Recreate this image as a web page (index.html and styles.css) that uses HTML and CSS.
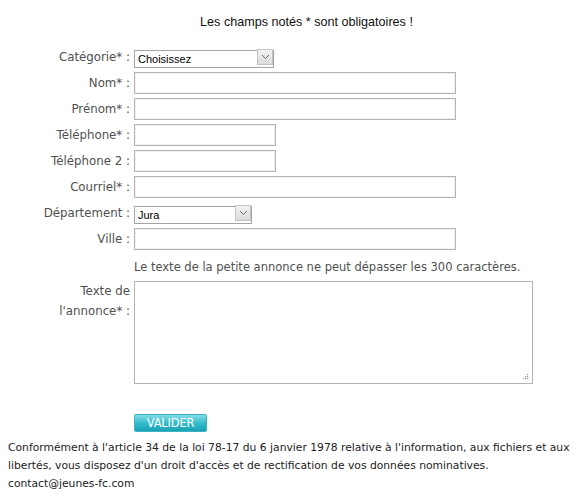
FILE: index.html
```html
<!DOCTYPE html>
<html lang="fr">
<head>
  <meta charset="UTF-8">
  <title>Petite annonce</title>
  <link rel="stylesheet" href="styles.css">
</head>
<body>

  <p class="required-note">Les champs notés * sont obligatoires !</p>

  <form class="ad-form" action="#" method="post">
    <label class="field-label" for="cat">Catégorie* :</label>
    <div class="field">
      <div class="select-wrap cat-select">
        <select id="cat"><option>Choisissez</option></select>
        <span class="select-arrow"><svg width="9" height="6" viewBox="0 0 9 6"><path d="M1 1 L4.5 4.5 L8 1" fill="none" stroke="#666" stroke-width="1"/></svg></span>
      </div>
    </div>

    <label class="field-label" for="nom">Nom* :</label>
    <div class="field"><input type="text" id="nom" class="wide"></div>

    <label class="field-label" for="prenom">Prénom* :</label>
    <div class="field"><input type="text" id="prenom" class="wide"></div>

    <label class="field-label" for="tel">Téléphone* :</label>
    <div class="field"><input type="text" id="tel" class="short"></div>

    <label class="field-label" for="tel2">Téléphone 2 :</label>
    <div class="field"><input type="text" id="tel2" class="short"></div>

    <label class="field-label" for="mail">Courriel* :</label>
    <div class="field"><input type="text" id="mail" class="wide"></div>

    <label class="field-label" for="dep">Département :</label>
    <div class="field">
      <div class="select-wrap dep-select">
        <select id="dep"><option>Jura</option></select>
        <span class="select-arrow"><svg width="9" height="6" viewBox="0 0 9 6"><path d="M1 1 L4.5 4.5 L8 1" fill="none" stroke="#666" stroke-width="1"/></svg></span>
      </div>
    </div>

    <label class="field-label" for="ville">Ville :</label>
    <div class="field"><input type="text" id="ville" class="wide"></div>

    <div></div>
    <p class="limit-note">Le texte de la petite annonce ne peut dépasser les 300 caractères.</p>

    <label class="field-label multi" for="texte">Texte de l'annonce* :</label>
    <div class="field text-field">
      <textarea id="texte"></textarea>
      <!-- resize grip -->
      <svg class="grip" width="7" height="7" viewBox="0 0 7 7">
        <rect x="5" y="0" width="1.2" height="1.2" fill="#999"/>
        <rect x="3" y="2" width="1.2" height="1.2" fill="#999"/>
        <rect x="5" y="2" width="1.2" height="1.2" fill="#999"/>
        <rect x="1" y="4" width="1.2" height="1.2" fill="#999"/>
        <rect x="3" y="4" width="1.2" height="1.2" fill="#999"/>
        <rect x="5" y="4" width="1.2" height="1.2" fill="#999"/>
      </svg>
    </div>

    <div></div>
    <div class="submit-row"><button type="submit">VALIDER</button></div>
  </form>

  <p class="legal">Conformément à l'article 34 de la loi 78-17 du 6 janvier 1978 relative à l'information, aux fichiers et aux libertés, vous disposez d'un droit d'accès et de rectification de vos données nominatives.<br>contact@jeunes-fc.com</p>

</body>
</html>
```

FILE: styles.css
```css
body {
  margin: 8px 2px 8px 8px;
  font-family: 'DejaVu Sans', Verdana, sans-serif;
  color: #333;
  background: #fff;
}

.required-note {
  font-family: 'Liberation Sans', Arial, sans-serif;
  font-size: 12.6px;
  color: #111;
  text-align: center;
  margin: 7px 0 0 0;
  padding-left: 32px;
  line-height: 14px;
}

.ad-form {
  display: grid;
  grid-template-columns: 122px 1fr;
  column-gap: 4px;
  row-gap: 4px;
  margin-top: 17px;
}

.field-label {
  font-size: 11.8px;
  color: #505050;
  text-align: right;
  line-height: 22px;
  white-space: nowrap;
}

.field-label.multi {
  white-space: normal;
  line-height: 20px;
  padding-left: 40px;
}

.field {
  display: flex;
  align-items: center;
  height: 22px;
}

input[type="text"] {
  box-sizing: border-box;
  height: 22px;
  border: 1px solid #b4b4b4;
  box-shadow: inset 0 0 0 1px #f2f2f2;
  margin: 0;
  padding: 1px 3px;
  font: 11px 'Liberation Sans', Arial, sans-serif;
}

input.wide {
  width: 322px;
}

input.short {
  width: 142px;
}

.select-wrap {
  position: relative;
  height: 18px;
}

.cat-select {
  width: 140px;
}

.dep-select {
  width: 118px;
}

.select-wrap select {
  appearance: none;
  -webkit-appearance: none;
  box-sizing: border-box;
  width: 100%;
  height: 18px;
  margin: 0;
  padding: 0 0 0 3px;
  border: 1px solid #a5a5a5;
  border-radius: 0;
  background: #fff;
  font: 11px 'Liberation Sans', Arial, sans-serif;
  color: #000;
}

.select-arrow {
  position: absolute;
  top: 1px;
  right: 1px;
  width: 16px;
  height: 16px;
  box-sizing: border-box;
  border: 1px solid #c3c3c3;
  background: linear-gradient(#f3f3f3, #dcdcdc);
  display: flex;
  align-items: center;
  justify-content: center;
  pointer-events: none;
}

.limit-note {
  margin: 6px 0 3px 0;
  font-size: 11.5px;
  color: #505050;
  line-height: 14px;
  white-space: nowrap;
}

.ad-form .text-field {
  height: auto;
  position: relative;
  align-self: start;
  width: 399px;
}

textarea {
  box-sizing: border-box;
  width: 399px;
  height: 103px;
  margin: 0;
  border: 1px solid #b4b4b4;
  resize: none;
  display: block;
  font: 11px 'Liberation Sans', Arial, sans-serif;
}

.grip {
  position: absolute;
  right: 4px;
  bottom: 3px;
}

.submit-row {
  padding-top: 26px;
}

.submit-row button {
  display: block;
  width: 73px;
  height: 18px;
  padding: 0;
  border: 1px solid #3bb3c2;
  border-radius: 2px;
  background: linear-gradient(#86dde8, #35bccb 50%, #1aa2b4);
  color: #fff;
  font: 11.5px 'DejaVu Sans', Verdana, sans-serif;
  letter-spacing: -0.2px;
  cursor: pointer;
}

.legal {
  margin: 7px 0 0 0;
  font-size: 10.75px;
  line-height: 18px;
  color: #222;
}
```
